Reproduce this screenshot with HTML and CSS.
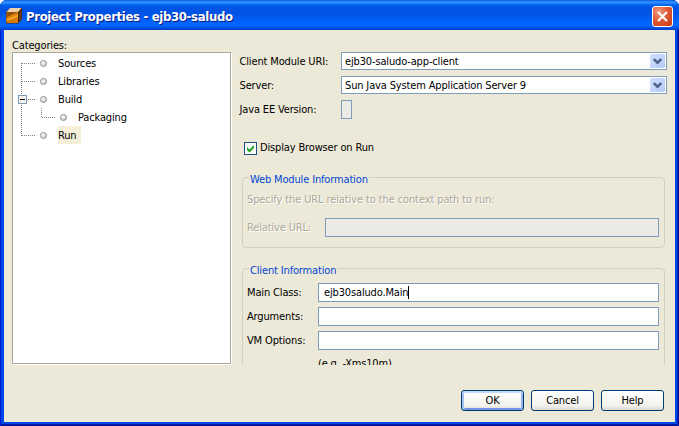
FILE: index.html
```html
<!DOCTYPE html>
<html lang="en">
<head>
<meta charset="utf-8">
<title>Project Properties - ejb30-saludo</title>
<link rel="stylesheet" href="styles.css">
</head>
<body>
<div class="window">
  <header class="titlebar">
    <svg class="app-icon" width="16" height="16" viewBox="0 0 16 16">
      <path d="M0 4 4 0H16V11L12 15.500H0Z" fill="#4a2708"/>
      <path d="M.5 4 4 0H15.500L12 4Z" fill="#ecd0ab"/>
      <path d="M.5 4H12V15H.5Z" fill="#d97b0c"/>
      <path d="M.5 4H12L.5 9Z" fill="#944f08"/>
      <path d="M.5 11 12 6.500V9L.5 13Z" fill="#f5a62a"/>
      <path d="M13 4.500 15.500 1.500V11L13 14Z" fill="#6a3b18"/>
    </svg>
    <h1 class="title">Project Properties - ejb30-saludo</h1>
    <button class="close" aria-label="Close"><svg width="19" height="19" viewBox="0 0 19 19"><path d="M5 5 14 14M14 5 5 14" stroke="#fff" stroke-width="2.2"/></svg></button>
  </header>
  <main class="content">
    <section class="categories">
      <div class="heading">Categories:</div>
      <div class="tree">
        <svg class="lines" width="60" height="92" viewBox="0 0 60 92" shape-rendering="crispEdges">
          <g fill="none" stroke="#808080" stroke-dasharray="1 1">
            <path d="M8.500 10V83"/><path d="M9 10.500H22M9 28.500H22M15 46.500H22M9 82.500H22"/>
            <path d="M28.500 55V64M29 64.500H42"/>
          </g>
          <rect x="5.500" y="42.500" width="8" height="8" fill="#f4f3ee" stroke="#7898b5"/>
          <path d="M7 46.500H12" stroke="#000"/>
        </svg>
        <div class="row"><i class="dot"></i><span>Sources</span></div>
        <div class="row"><i class="dot"></i><span>Libraries</span></div>
        <div class="row"><i class="dot"></i><span>Build</span></div>
        <div class="row child"><i class="dot"></i><span>Packaging</span></div>
        <div class="row selected"><i class="dot"></i><span>Run</span></div>
      </div>
    </section>
    <section class="settings">
      <div class="field">
        <label>Client Module URI:</label>
        <div class="combo"><span>ejb30-saludo-app-client</span><b class="arrow"><svg width="9" height="7" viewBox="0 0 9 7"><path d="M.8 1 4.500 4.700 8.200 1" fill="none" stroke="#4d6185" stroke-width="2.400"/></svg></b></div>
      </div>
      <div class="field">
        <label>Server:</label>
        <div class="combo"><span>Sun Java System Application Server 9</span><b class="arrow"><svg width="9" height="7" viewBox="0 0 9 7"><path d="M.8 1 4.500 4.700 8.200 1" fill="none" stroke="#4d6185" stroke-width="2.400"/></svg></b></div>
      </div>
      <div class="field">
        <label>Java EE Version:</label>
        <div class="version"></div>
      </div>
      <div class="check">
        <span class="checkbox"><svg width="11" height="11" viewBox="0 0 11 11"><path d="M2 4V7L4.500 9.500 9 5V2L4.500 6.500Z" fill="#21a121"/></svg></span>
        <span>Display Browser on Run</span>
      </div>
      <div class="group web">
        <div class="legend">Web Module Information</div>
        <div class="hint">Specify the URL relative to the context path to run:</div>
        <div class="entry"><label>Relative URL:</label><div class="input disabled"></div></div>
      </div>
      <div class="group client">
        <div class="legend">Client Information</div>
        <div class="entry"><label>Main Class:</label><div class="input"><span class="value">ejb30saludo.Main</span><i class="caret"></i></div></div>
        <div class="entry"><label>Arguments:</label><div class="input"></div></div>
        <div class="entry"><label>VM Options:</label><div class="input"></div></div>
        <div class="example">(e.g. -Xms10m)</div>
      </div>
    </section>
  </main>
  <footer class="actions">
    <button class="button default">OK</button>
    <button class="button">Cancel</button>
    <button class="button">Help</button>
  </footer>
</div>
</body>
</html>
```
FILE: styles.css
```css
* { box-sizing: border-box; }
body { margin: 0; background: #fff; font: 11px/19px "DejaVu Sans Condensed", "DejaVu Sans", sans-serif; letter-spacing: -.15px; color: #000; overflow: hidden; }
span, label, .hint { white-space: nowrap; }
button { font: inherit; letter-spacing: inherit; padding: 0; }
.window { width: 679px; height: 426px; padding: 0 4px 4px; border-radius: 7px 7px 0 0; background: #0047e8; box-shadow: inset 1px 0 #0019cf, inset -1px 0 #001198, inset -2px 0 #0026b8, inset 0 -1px #00138c, inset 0 -2px #001ca8; display: flex; flex-direction: column; overflow: hidden; }
.titlebar { height: 30px; flex: none; margin: 0 -4px; padding: 0 6px 0 6px; display: flex; align-items: center; background: linear-gradient(#0058e6 0, #3a93ff 2px, #268bff 3px, #0362ee 5px, #0054e3 8px, #0054e5 14px, #0060fa 20px, #0068ff 25px, #005df5 27px, #0045d2 29px, #003dcc 30px); }
.app-icon { flex: none; margin-top: 2px; }
.title { margin: 3px 0 0 4px; font: bold 13px/20px "DejaVu Sans Condensed", sans-serif; color: #fff; text-shadow: 1px 1px #0a1883; white-space: nowrap; letter-spacing: -.34px; flex: 1; }
.close { width: 21px; height: 21px; margin-top: 3px; border: 1px solid #fff; border-radius: 3px; background: radial-gradient(circle at 30% 25%, #f0987c, #e15b36 45%, #c63a12); }
.close svg { display: block; }
.content { height: 335px; display: flex; padding: 8px 8px 0; background: #ece9d8; }
.categories { width: 220px; flex: none; }
.heading { height: 14px; line-height: 15px; }
.tree { position: relative; width: 219px; height: 312px; padding-top: 1px; background: #fff; border: 1px solid #aca899; box-shadow: 1px 1px #fff; }
.lines { position: absolute; left: 0; top: 0; }
.row { display: flex; align-items: center; height: 18px; padding-left: 27px; line-height: 18px; }
.row span { margin-top: 1px; }
.row.child { padding-left: 47px; }
.dot { width: 7px; height: 7px; border: 1px solid #8b8b8b; border-radius: 50%; background: radial-gradient(circle at 35% 30%, #fff, #bbb); margin-right: 11px; z-index: 1; }
.selected { width: 68px; background: linear-gradient(90deg, #fff 45px, #f5efd9 45px); }
.settings { flex: 1; padding: 14px 0 0 6px; overflow: hidden; min-width: 0; }
.field { display: grid; grid-template-columns: 103px 326px; height: 24px; }
.field label { padding-left: 1.5px; }
.combo { display: flex; align-items: center; justify-content: space-between; height: 18px; border: 1px solid #7f9db9; background: #fff; padding: 0 1px 0 3px; line-height: 16px; }
.combo span { margin-top: 1px; }
.arrow { width: 15px; height: 14px; border-radius: 1px; background: linear-gradient(135deg, #d4e0ff, #b4c8f8); display: flex; align-items: center; justify-content: center; }
.version, .input.disabled { background: #ebeae4; }
.version { width: 11px; height: 19px; border: 1px solid #7f9db9; }
.check { display: flex; align-items: center; gap: 3px; height: 18px; margin: 15px 0 0 6px; line-height: 18px; }
.checkbox { width: 13px; height: 13px; border: 1px solid #1c5180; background: #fbfbf9; }
.checkbox svg { display: block; }
.group { width: 423px; margin-left: 4px; border: 1px solid #d0d0bf; border-radius: 4px; padding: 0 5px 0 4px; }
.web { height: 71px; margin-top: 20px; }
.client { height: 120px; margin-top: 20px; }
.legend { width: max-content; height: 16px; margin: -7px 0 0 2px; padding: 0 1px; background: #ece9d8; color: #0046d5; line-height: 17px; }
.hint { height: 18px; margin-top: 3px; letter-spacing: -.11px; }
.hint, .web .entry { color: #aca899; text-shadow: 1px 1px #fff; }
.entry { display: grid; grid-template-columns: 71px 341px; height: 24px; }
.web .entry { grid-template-columns: 78px 334px; margin-top: 10px; }
.client .entry:nth-child(2) { margin-top: 5px; }
.input { height: 19px; border: 1px solid #7f9db9; background: #fff; padding-left: 5px; line-height: 17px; display: flex; align-items: center; }
.value { letter-spacing: -.15px; }
.caret { width: 1px; height: 13px; background: #000; }
.example { padding-left: 71px; line-height: 17px; letter-spacing: -.2px; }
.actions { flex: 1; background: #ece9d8; display: flex; gap: 7px; justify-content: flex-end; padding: 25px 11px 0 0; }
.button { width: 63px; height: 21px; border: 1px solid #003c74; border-radius: 3px; background: linear-gradient(#fff, #f3f2ee 75%, #dedad0); line-height: 19px; }
.default { box-shadow: inset 0 2px #c2d8fd, inset 2px 0 #a5c0f0, inset -2px 0 #94b2ea, inset 0 -2px #7593e1; }
```
